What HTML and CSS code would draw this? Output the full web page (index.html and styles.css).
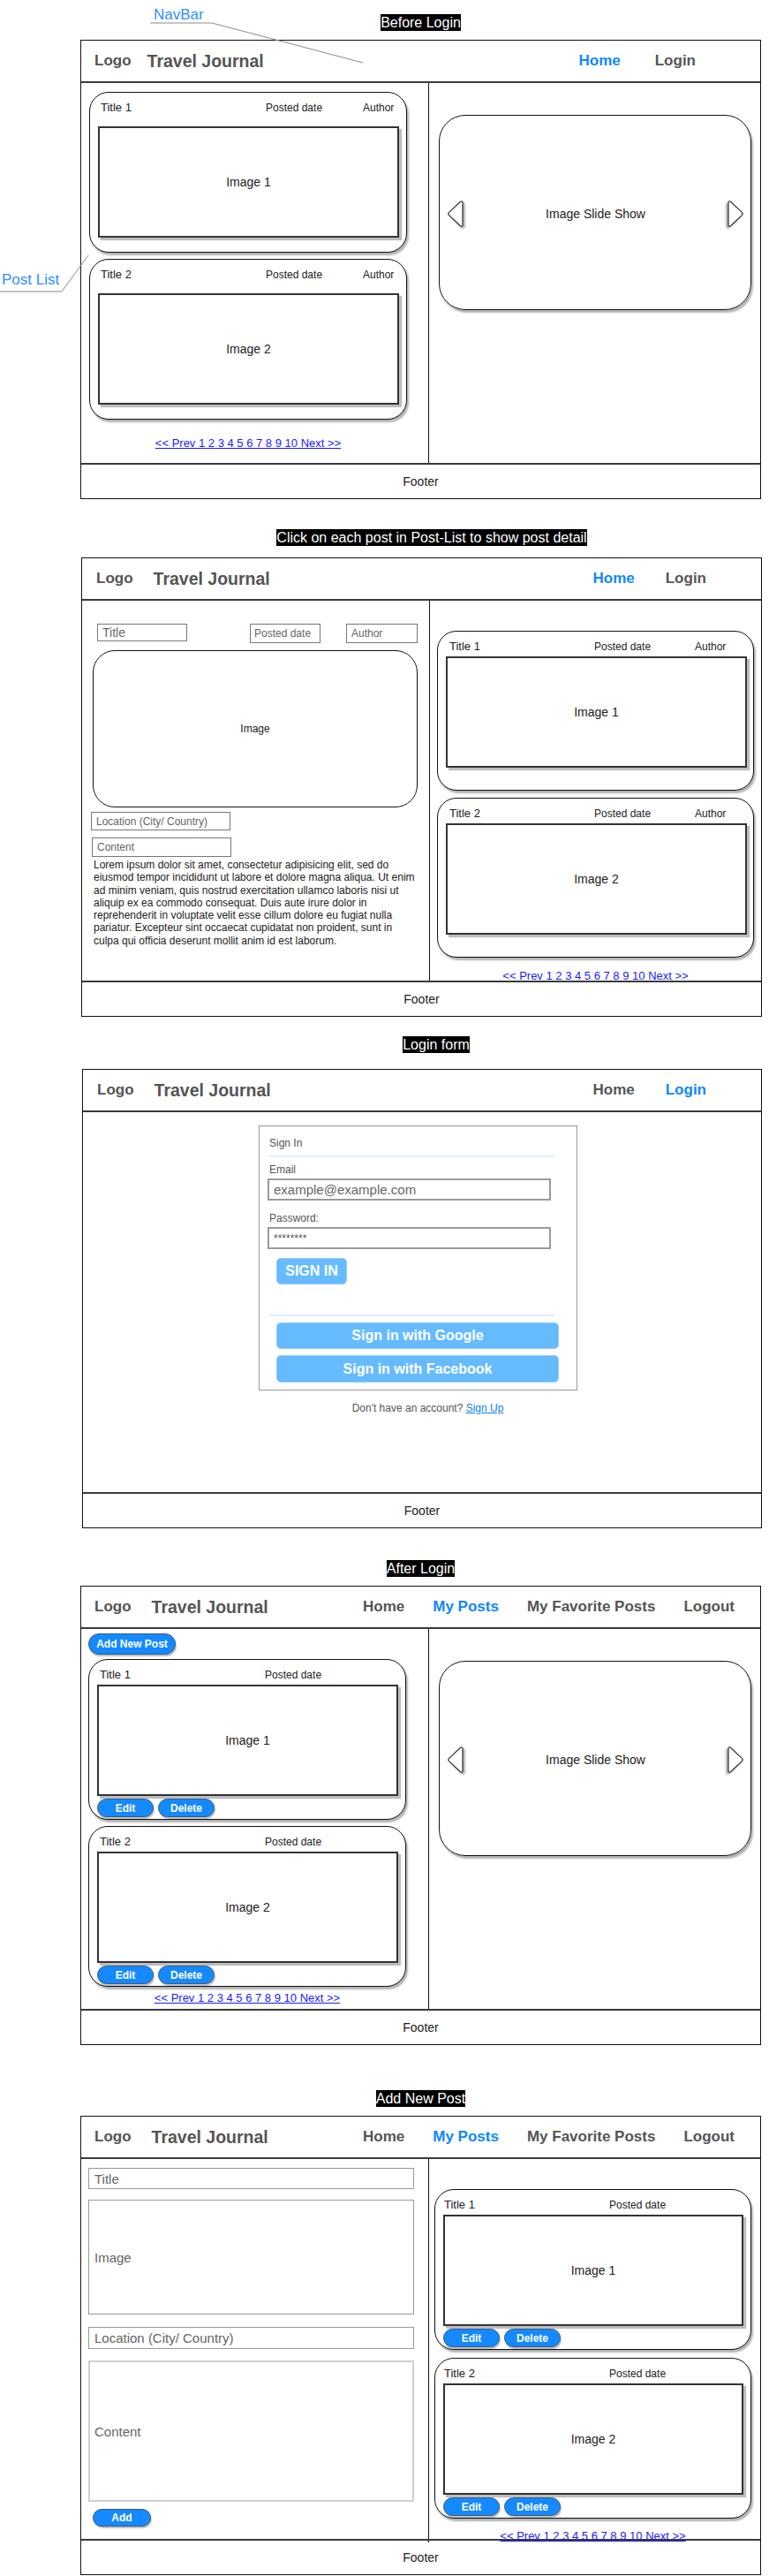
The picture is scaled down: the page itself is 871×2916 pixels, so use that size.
FILE: index.html
```html
<!DOCTYPE html>
<html lang="en">
<head>
<meta charset="utf-8">
<title>Travel Journal – Wireframes</title>
<link rel="stylesheet" href="styles.css">
</head>
<body>
<div class="page">
  <svg class="callouts" width="871" height="340" viewBox="0 0 871 340" aria-hidden="true">
    <polyline points="170,26 240,26 411,71"/>
    <polyline points="0,330 70,330 100,289"/>
  </svg>
  <span class="callout callout--navbar">NavBar</span>
  <span class="callout callout--postlist">Post List</span>

  <!-- 1. Before login -->
  <section class="sheet sheet--1">
    <div class="caption"><span>Before Login</span></div>
    <div class="screen">
      <nav class="nav nav--guest">
        <span class="logo">Logo</span>
        <span class="brand brand--near">Travel Journal</span>
        <div class="nav-links">
          <a class="is-active" href="#">Home</a>
          <a href="#">Login</a>
        </div>
      </nav>
      <main class="body">
        <div class="list-col list-col--s1">
          <article class="card card--roomy">
            <header class="card-head"><span class="card-title">Title 1</span><span class="card-date">Posted date</span><span class="card-author">Author</span></header>
            <div class="pic">Image 1</div>
          </article>
          <article class="card card--roomy">
            <header class="card-head"><span class="card-title">Title 2</span><span class="card-date">Posted date</span><span class="card-author">Author</span></header>
            <div class="pic">Image 2</div>
          </article>
          <div class="pager pager--s1"><a href="#">&lt;&lt; Prev 1 2 3 4 5 6 7 8 9 10 Next &gt;&gt;</a></div>
        </div>
        <div class="side-col side-col--slides">
          <div class="slideshow">
            <svg class="arrow" width="19" height="32" viewBox="0 0 19 32"><path d="M15.5 2.2 C17 1.2 18 2 18 3.6 V28.4 C18 30 17 30.8 15.5 29.8 L2.6 17.6 C1.6 16.6 1.6 15.4 2.6 14.4 Z"/></svg>
            <span>Image Slide Show</span>
            <svg class="arrow arrow--next" width="19" height="32" viewBox="0 0 19 32"><path d="M15.5 2.2 C17 1.2 18 2 18 3.6 V28.4 C18 30 17 30.8 15.5 29.8 L2.6 17.6 C1.6 16.6 1.6 15.4 2.6 14.4 Z"/></svg>
          </div>
        </div>
      </main>
      <footer class="foot">Footer</footer>
    </div>
  </section>

  <!-- 2. Post detail -->
  <section class="sheet sheet--2">
    <div class="caption caption--s2"><span>Click on each post in Post-List to show post detail</span></div>
    <div class="screen">
      <nav class="nav nav--mid">
        <span class="logo">Logo</span>
        <span class="brand">Travel Journal</span>
        <div class="nav-links">
          <a class="is-active" href="#">Home</a>
          <a href="#">Login</a>
        </div>
      </nav>
      <main class="body">
        <div class="detail-col">
          <div class="detail-meta">
            <div class="field field--title">Title</div>
            <div class="field field--date">Posted date</div>
            <div class="field field--author">Author</div>
          </div>
          <div class="detail-pic">Image</div>
          <div class="field field--loc">Location (City/ Country)</div>
          <div class="field field--content">Content</div>
          <p class="lorem">Lorem ipsum dolor sit amet, consectetur adipisicing elit, sed do eiusmod tempor incididunt ut labore et dolore magna aliqua. Ut enim ad minim veniam, quis nostrud exercitation ullamco laboris nisi ut aliquip ex ea commodo consequat. Duis aute irure dolor in reprehenderit in voluptate velit esse cillum dolore eu fugiat nulla pariatur. Excepteur sint occaecat cupidatat non proident, sunt in culpa qui officia deserunt mollit anim id est laborum.</p>
        </div>
        <div class="side-col side-col--s2">
          <article class="card card--tight card--s2">
            <header class="card-head"><span class="card-title">Title 1</span><span class="card-date">Posted date</span><span class="card-author">Author</span></header>
            <div class="pic">Image 1</div>
          </article>
          <article class="card card--tight card--s2">
            <header class="card-head"><span class="card-title">Title 2</span><span class="card-date">Posted date</span><span class="card-author">Author</span></header>
            <div class="pic">Image 2</div>
          </article>
          <div class="pager pager--tight"><a href="#">&lt;&lt; Prev 1 2 3 4 5 6 7 8 9 10 Next &gt;&gt;</a></div>
        </div>
      </main>
      <footer class="foot">Footer</footer>
    </div>
  </section>

  <!-- 3. Login form -->
  <section class="sheet sheet--3">
    <div class="caption caption--s3"><span>Login form</span></div>
    <div class="screen">
      <nav class="nav nav--mid">
        <span class="logo">Logo</span>
        <span class="brand">Travel Journal</span>
        <div class="nav-links">
          <a href="#">Home</a>
          <a class="is-active" href="#">Login</a>
        </div>
      </nav>
      <main class="login-body">
        <form class="signin">
          <div class="signin-title">Sign In</div>
          <div class="signin-rule"></div>
          <div class="signin-label">Email</div>
          <div class="signin-input">example@example.com</div>
          <div class="signin-label signin-label--gap">Password:</div>
          <div class="signin-input signin-input--pw">********</div>
          <button class="sbtn sbtn--main" type="button">SIGN IN</button>
          <div class="signin-rule signin-rule--low"></div>
          <button class="sbtn sbtn--wide" type="button">Sign in with Google</button>
          <button class="sbtn sbtn--wide" type="button">Sign in with Facebook</button>
        </form>
        <p class="signup">Don't have an account? <a href="#">Sign Up</a></p>
      </main>
      <footer class="foot">Footer</footer>
    </div>
  </section>

  <!-- 4. After login -->
  <section class="sheet sheet--4">
    <div class="caption"><span>After Login</span></div>
    <div class="screen">
      <nav class="nav nav--user">
        <span class="logo">Logo</span>
        <span class="brand">Travel Journal</span>
        <div class="nav-links">
          <a href="#">Home</a>
          <a class="is-active" href="#">My Posts</a>
          <a href="#">My Favorite Posts</a>
          <a href="#">Logout</a>
        </div>
      </nav>
      <main class="body">
        <div class="list-col list-col--s4">
          <button class="pill pill--add" type="button">Add New Post</button>
          <article class="card card--own">
            <header class="card-head"><span class="card-title">Title 1</span><span class="card-date">Posted date</span></header>
            <div class="pic">Image 1</div>
            <div class="card-actions"><button class="pill" type="button">Edit</button><button class="pill" type="button">Delete</button></div>
          </article>
          <article class="card card--own">
            <header class="card-head"><span class="card-title">Title 2</span><span class="card-date">Posted date</span></header>
            <div class="pic">Image 2</div>
            <div class="card-actions"><button class="pill" type="button">Edit</button><button class="pill" type="button">Delete</button></div>
          </article>
          <div class="pager pager--s4"><a href="#">&lt;&lt; Prev 1 2 3 4 5 6 7 8 9 10 Next &gt;&gt;</a></div>
        </div>
        <div class="side-col side-col--slides">
          <div class="slideshow">
            <svg class="arrow" width="19" height="32" viewBox="0 0 19 32"><path d="M15.5 2.2 C17 1.2 18 2 18 3.6 V28.4 C18 30 17 30.8 15.5 29.8 L2.6 17.6 C1.6 16.6 1.6 15.4 2.6 14.4 Z"/></svg>
            <span>Image Slide Show</span>
            <svg class="arrow arrow--next" width="19" height="32" viewBox="0 0 19 32"><path d="M15.5 2.2 C17 1.2 18 2 18 3.6 V28.4 C18 30 17 30.8 15.5 29.8 L2.6 17.6 C1.6 16.6 1.6 15.4 2.6 14.4 Z"/></svg>
          </div>
        </div>
      </main>
      <footer class="foot">Footer</footer>
    </div>
  </section>

  <!-- 5. Add new post -->
  <section class="sheet sheet--5">
    <div class="caption"><span>Add New Post</span></div>
    <div class="screen">
      <nav class="nav nav--user">
        <span class="logo">Logo</span>
        <span class="brand">Travel Journal</span>
        <div class="nav-links">
          <a href="#">Home</a>
          <a class="is-active" href="#">My Posts</a>
          <a href="#">My Favorite Posts</a>
          <a href="#">Logout</a>
        </div>
      </nav>
      <main class="body">
        <div class="form-col">
          <div class="ffield ffield--title">Title</div>
          <div class="ffield ffield--image">Image</div>
          <div class="ffield ffield--loc">Location (City/ Country)</div>
          <div class="ffield ffield--content">Content</div>
          <button class="pill pill--small" type="button">Add</button>
        </div>
        <div class="side-col side-col--s5">
          <article class="card card--own card--s5">
            <header class="card-head"><span class="card-title">Title 1</span><span class="card-date">Posted date</span></header>
            <div class="pic">Image 1</div>
            <div class="card-actions"><button class="pill" type="button">Edit</button><button class="pill" type="button">Delete</button></div>
          </article>
          <article class="card card--own card--s5">
            <header class="card-head"><span class="card-title">Title 2</span><span class="card-date">Posted date</span></header>
            <div class="pic">Image 2</div>
            <div class="card-actions"><button class="pill" type="button">Edit</button><button class="pill" type="button">Delete</button></div>
          </article>
          <div class="pager pager--s5"><a href="#">&lt;&lt; Prev 1 2 3 4 5 6 7 8 9 10 Next &gt;&gt;</a></div>
        </div>
      </main>
      <footer class="foot">Footer</footer>
    </div>
  </section>
</div>
</body>
</html>
```
FILE: styles.css
```css
* { box-sizing: border-box; }

body {
  margin: 0;
  background: #fff;
  color: #222;
  font-family: "Liberation Sans", Arial, Helvetica, sans-serif;
}

.page {
  position: relative;
  width: 871px;
  height: 2916px;
  overflow: hidden;
}

/* annotations */
.callouts {
  position: absolute;
  top: 0;
  left: 0;
  pointer-events: none;
  z-index: 2;
}
.callouts polyline {
  fill: none;
  stroke: #8a8a8a;
  stroke-width: 1;
}
.callout {
  position: absolute;
  font-size: 17px;
  line-height: 20px;
  color: #2f8fff;
  z-index: 2;
}
.callout--navbar { left: 174px; top: 7px; }
.callout--postlist { left: 2px; top: 307px; }

/* sheets */
.sheet--1 { padding-top: 16px; }
.sheet--2 { margin-top: 34px; }
.sheet--3 { margin-top: 22px; }
.sheet--4 { margin-top: 36px; }
.sheet--5 { margin-top: 51px; }

.caption {
  margin-left: 91px;
  width: 771px;
  height: 19px;
  margin-bottom: 10px;
  text-align: center;
}
.caption span {
  display: inline-block;
  background: #000;
  color: #fff;
  font-size: 16px;
  line-height: 19px;
  vertical-align: top;
}
.caption--s2 { padding-left: 25px; margin-bottom: 13px; }
.caption--s3 { padding-left: 35px; margin-bottom: 18px; }

.screen {
  margin-left: 91px;
  width: 771px;
  height: 520px;
  border: 1px solid #111;
  display: grid;
  grid-template-rows: 48px 1fr 40px;
}
.sheet--2 .screen { margin-left: 92px; }
.sheet--3 .screen { margin-left: 93px; width: 770px; }

/* nav */
.nav {
  display: flex;
  align-items: center;
  padding: 0 73px 0 15px;
  border-bottom: 2px solid #3a3a3a;
}
.nav--mid { padding: 0 62px 0 16px; }
.nav--user { padding: 0 29px 0 15px; }

.logo {
  font-size: 17px;
  font-weight: bold;
  color: #555;
}
.brand {
  margin-left: 23px;
  font-size: 19.5px;
  font-weight: bold;
  color: #555;
}
.brand--near { margin-left: 18px; }

.nav-links {
  margin-left: auto;
  display: flex;
  gap: 39px;
}
.nav--mid .nav-links { gap: 35px; }
.nav--user .nav-links { gap: 32px; }
.nav-links a {
  font-size: 17px;
  font-weight: bold;
  color: #555;
  text-decoration: none;
}
.nav-links a.is-active { color: #0f87ff; }

/* footer */
.foot {
  border-top: 2px solid #3a3a3a;
  display: flex;
  align-items: center;
  justify-content: center;
  font-size: 14px;
  color: #222;
}

/* body grid */
.body {
  display: grid;
  grid-template-columns: 393px 1fr;
  min-height: 0;
}
.side-col { border-left: 1px solid #111; }

/* post list */
.list-col {
  display: flex;
  flex-direction: column;
  align-items: flex-start;
  gap: 7px;
}
.list-col--s1 { padding: 10px 0 0 9px; }
.list-col--s4 { padding: 5px 0 0 8px; }

.card {
  width: 360px;
  border: 1px solid #111;
  border-radius: 22px;
  padding: 0 8px 16px 9px;
  background: #fff;
  box-shadow: 2px 3px 2px rgba(0, 0, 0, 0.3);
}
.card-head {
  display: grid;
  grid-template-columns: 187px 110px auto;
  height: 27px;
  padding: 7px 0 0 3px;
  margin-bottom: 11px;
  line-height: 20px;
  white-space: nowrap;
}
.card-title { font-size: 13px; }
.card-date,
.card-author { font-size: 12px; }

.card--tight { padding-bottom: 25px; }
.card--tight .card-head,
.card--own .card-head { margin-bottom: 1px; }
.card--own { padding-bottom: 2px; }

.card--s2 { width: 359px; padding-right: 7px; }
.card--s2 .card-head {
  padding-left: 4px;
  grid-template-columns: 164px 114px auto;
}
.card--s5 { width: 359px; }
.card--s5 .card-head { padding-left: 1px; }

.pic {
  height: 126px;
  border: 2px solid #333;
  box-shadow: 3px 3px 1px #bdbdbd;
  display: flex;
  align-items: center;
  justify-content: center;
  font-size: 14px;
  background: #fff;
}

.card-actions {
  display: flex;
  gap: 5px;
  margin-top: 3px;
}

.pill {
  width: 64px;
  height: 21px;
  padding: 0;
  border: 1px solid #3c5c7c;
  border-radius: 11px;
  background: #1589ff;
  color: #fff;
  font-family: "Liberation Sans", Arial, sans-serif;
  font-size: 12px;
  font-weight: bold;
  box-shadow: 1px 2px 1px rgba(0, 0, 0, 0.25);
}
.pill--add {
  width: 99px;
  height: 24px;
  border-radius: 12px;
  margin-bottom: -2px;
}
.pill--small {
  width: 66px;
  height: 20px;
  margin: 8px 0 0 5px;
}

.pager {
  width: 360px;
  text-align: center;
  font-size: 13px;
  line-height: 15px;
}
.pager a { color: #1b1bff; text-decoration: underline; }
.pager--s1 { margin-top: 12px; }
.pager--s4 { margin-top: -2px; }
.pager--tight { width: 359px; margin-top: 5px; }
.pager--s5 { width: 359px; margin-top: 3px; }

/* slide show */
.side-col--slides { padding: 36px 0 0 11px; }
.slideshow {
  width: 354px;
  height: 221px;
  border: 1px solid #111;
  border-radius: 30px;
  box-shadow: 2px 3px 2px rgba(0, 0, 0, 0.3);
  display: flex;
  align-items: center;
  justify-content: space-between;
  padding: 2px 7px 0 8px;
  font-size: 14px;
}
.arrow { filter: drop-shadow(2px 2px 1px rgba(0, 0, 0, 0.35)); }
.arrow path {
  fill: #fff;
  stroke: #333;
  stroke-width: 1.2;
}
.arrow--next { transform: scaleX(-1); }

/* detail */
.detail-col { padding: 26px 13px 0 10px; }
.detail-meta {
  display: flex;
  align-items: flex-start;
  height: 22px;
}
.field {
  display: flex;
  align-items: center;
  border: 1px solid #777;
  padding-left: 5px;
  font-size: 12px;
  color: #666;
  white-space: nowrap;
}
.field--title { margin-left: 7px; width: 102px; height: 20px; font-size: 14px; }
.field--date { margin-left: auto; width: 80px; height: 22px; padding-left: 4px; }
.field--author { margin-left: 29px; width: 81px; height: 22px; }
.detail-pic {
  margin: 8px 0 0 2px;
  width: 368px;
  height: 178px;
  border: 1px solid #111;
  border-radius: 25px;
  display: flex;
  align-items: center;
  justify-content: center;
  font-size: 12px;
}
.field--loc { margin-top: 5px; width: 158px; height: 21px; }
.field--content { margin: 8px 0 0 1px; width: 158px; height: 22px; }
.lorem {
  margin: 2px 0 0 3px;
  width: 367px;
  font-size: 12px;
  line-height: 14.3px;
  color: #222;
}
.side-col--s2 {
  display: flex;
  flex-direction: column;
  gap: 8px;
  padding: 34px 0 0 8px;
}

/* login */
.login-body {
  display: flex;
  flex-direction: column;
  align-items: center;
  padding: 15px 9px 0 0;
}
.signin {
  width: 361px;
  height: 300px;
  margin: 0;
  border: 1px solid #999;
  padding: 12px 0 0 9px;
}
.signin-title,
.signin-label {
  margin-left: 2px;
  font-size: 12px;
  line-height: 14px;
  color: #555;
}
.signin-rule {
  width: 323px;
  height: 2px;
  margin: 7px 0 0 2px;
  background: #deedfd;
}
.signin-rule--low { margin-top: 34px; }
.signin-label { margin-top: 7px; }
.signin-label--gap { margin-top: 13px; }
.signin-input {
  margin-top: 3px;
  width: 321px;
  height: 25px;
  border: 2px solid #9a9a9a;
  padding-left: 5px;
  display: flex;
  align-items: center;
  font-size: 15px;
  color: #666;
}
.signin-input--pw { font-size: 12px; color: #555; }
.sbtn {
  display: block;
  height: 30px;
  margin: 10px 0 0 10px;
  padding: 0;
  border: 1px solid #8fcbff;
  border-radius: 5px;
  background: #66bbff;
  color: #fff;
  font-family: "Liberation Sans", Arial, sans-serif;
  font-size: 16px;
  font-weight: bold;
}
.sbtn--main { width: 80px; }
.sbtn--wide { width: 320px; margin-top: 7px; }
.sbtn--wide:last-child { height: 31px; }
.signup {
  margin: 13px 0 0 22px;
  font-size: 12px;
  line-height: 14px;
  color: #555;
}
.signup a { color: #0b7ff0; }

/* add post form */
.form-col {
  display: flex;
  flex-direction: column;
  align-items: flex-start;
  padding: 10px 0 0 8px;
}
.ffield {
  width: 369px;
  border: 1px solid #999;
  padding-left: 6px;
  display: flex;
  align-items: center;
  font-size: 15px;
  color: #666;
}
.ffield--title { height: 24px; }
.ffield--image { margin-top: 12px; height: 130px; }
.ffield--loc { margin-top: 14px; height: 25px; }
.ffield--content { margin-top: 13px; height: 160px; border: 2px solid #cfcfcf; padding-left: 5px; }
.side-col--s5 {
  display: flex;
  flex-direction: column;
  gap: 9px;
  padding: 34px 0 0 6px;
}
```
